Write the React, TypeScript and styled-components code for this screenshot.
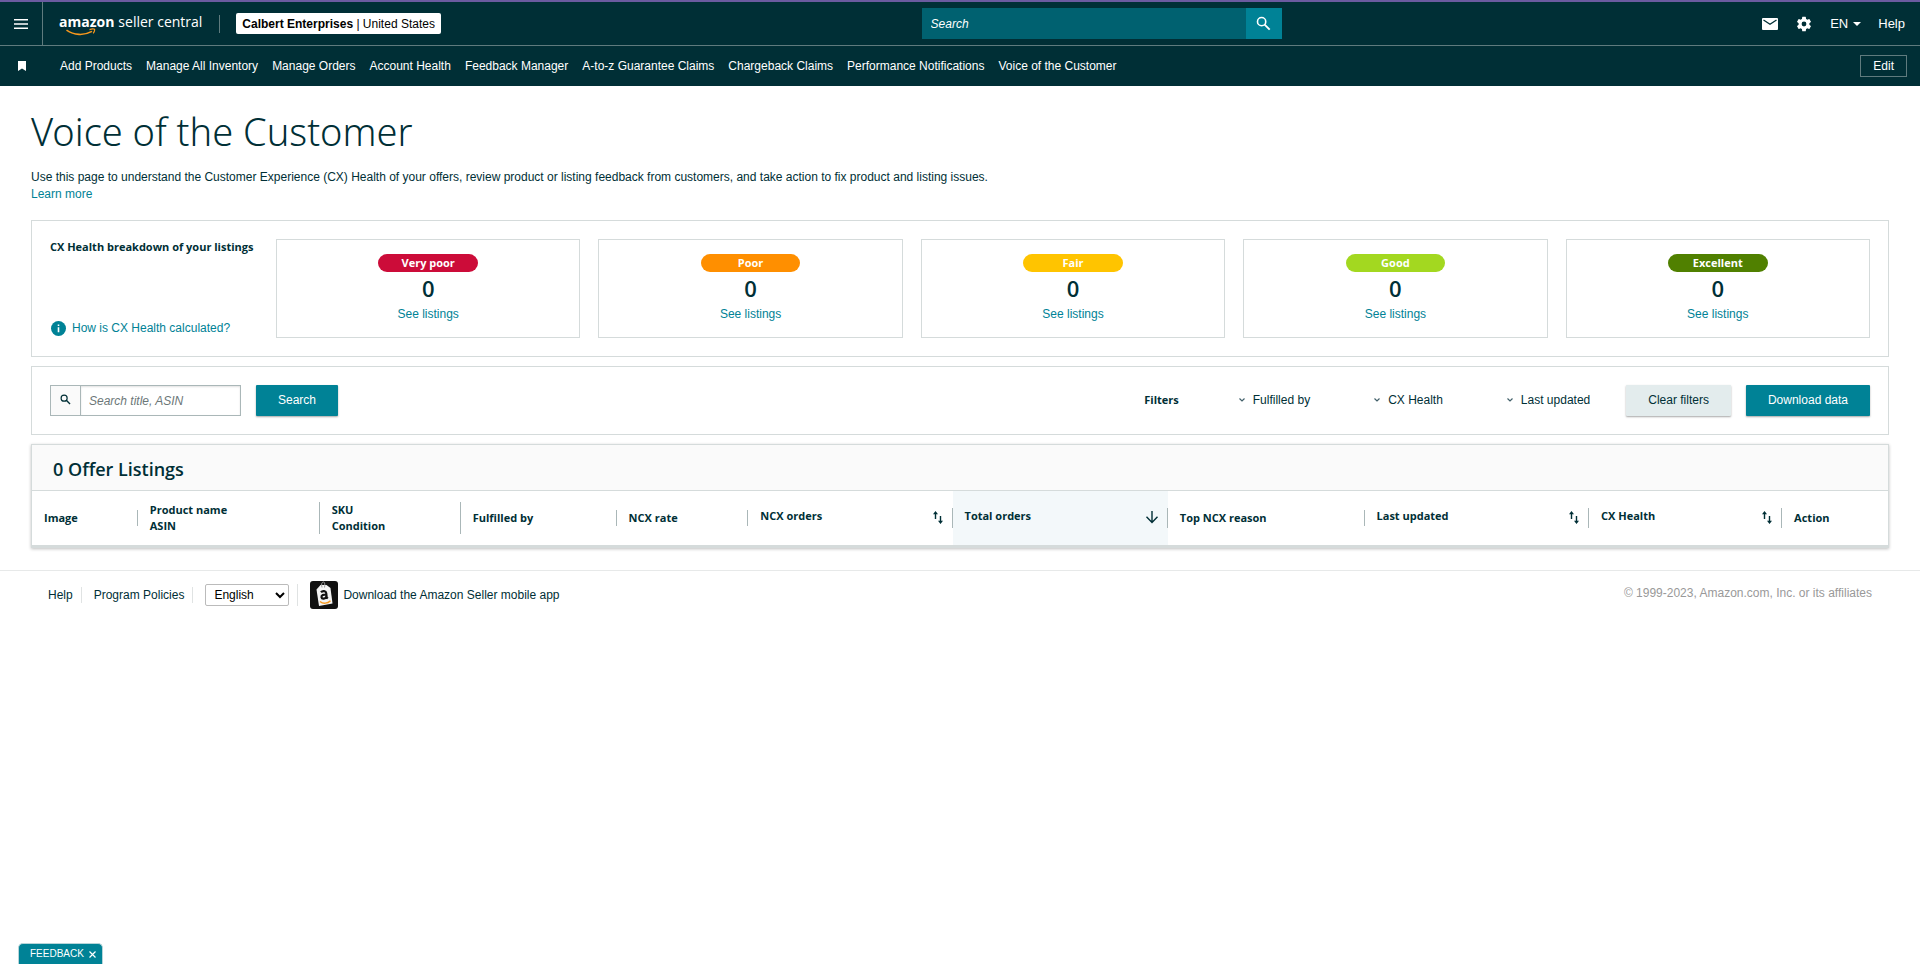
import React from "react";
import styled, { createGlobalStyle } from "styled-components";

const color = {
  ink: "#002f36",
  teal: "#008296",
  tealDark: "#006170",
  border: "#d5dbdb",
  rule: "#aab7b8",
  headRule: "#5f7b7e",
};

const display = `"Open Sans", "Noto Sans", sans-serif`;

const GlobalStyle = createGlobalStyle`
  *, *::before, *::after { box-sizing: border-box; }
  body {
    margin: 0;
    background: #fff;
    color: ${color.ink};
    font-family: "Liberation Sans", Arial, sans-serif;
    font-size: 12px;
    line-height: 16px;
  }
  a { color: inherit; text-decoration: none; }
  button, input, select { font: inherit; color: inherit; margin: 0; }
  button { border: 0; padding: 0; background: none; cursor: pointer; }
  h1, h2, p, ul { margin: 0; padding: 0; }
  ul { list-style: none; }
  svg { display: block; flex: none; }
`;

/* ---------- header ---------- */

const Header = styled.header`
  background: ${color.ink};
  color: #fff;
  border-top: 2px solid #6b5ba0;
`;

const TopBar = styled.div`
  display: grid;
  grid-template-columns: 48% 360px 1fr;
  height: 44px;
  align-items: center;
  border-bottom: 1px solid ${color.headRule};
`;

const TopLeft = styled.div`
  display: flex;
  align-items: center;
  align-self: stretch;
`;

const MenuButton = styled.button`
  align-self: stretch;
  width: 43px;
  display: flex;
  align-items: center;
  justify-content: center;
  border-right: 1px solid ${color.headRule};
`;

const Logo = styled.a`
  position: relative;
  display: flex;
  gap: 4px;
  margin-left: 16px;
  padding-bottom: 3px;
  font-family: ${display};
  font-size: 14px;
  line-height: 20px;
  white-space: nowrap;

  svg {
    position: absolute;
    left: 7px;
    top: 16px;
  }
`;

const HeadDivider = styled.span`
  width: 1px;
  height: 18px;
  margin: 0 16px 0 17px;
  background: ${color.headRule};
`;

const StoreButton = styled.button`
  height: 21px;
  padding: 0 6px;
  border-radius: 2px;
  background: #fff;
  color: #000;
  white-space: nowrap;
`;

const SiteSearch = styled.form`
  display: flex;
  height: 31px;

  input {
    flex: 1;
    min-width: 0;
    padding: 0 9px;
    border: 0;
    border-radius: 0;
    background: ${color.tealDark};
    color: #fff;
  }
  input::placeholder {
    color: #fff;
    font-style: italic;
    opacity: 1;
  }
  button {
    width: 36px;
    display: flex;
    align-items: center;
    justify-content: center;
    background: ${color.teal};
  }
`;

const TopRight = styled.div`
  display: flex;
  align-items: center;
  justify-content: flex-end;
  gap: 17px;
  padding-right: 15px;
`;

const IconButton = styled.button`
  display: flex;
  align-items: center;
`;

const LanguageButton = styled.button`
  display: flex;
  align-items: center;
  gap: 5px;
  font-size: 13px;
`;

const HelpLink = styled.a`
  font-size: 13px;
`;

const FavoritesBar = styled.nav`
  display: flex;
  align-items: center;
  height: 40px;
  padding: 0 13px 0 18px;
`;

const FavoritesList = styled.ul`
  flex: 1;
  display: flex;
  gap: 14px;
  margin-left: 34px;
  white-space: nowrap;
`;

const EditButton = styled.button`
  height: 22px;
  padding: 0 12px;
  border: 1px solid ${color.headRule};
`;

/* ---------- page ---------- */

const Main = styled.main`
  padding: 21px 31px 22px;
`;

const Title = styled.h1`
  font-family: "Noto Sans", sans-serif;
  font-weight: 300;
  font-size: 38px;
  line-height: 48px;
`;

const Intro = styled.p`
  margin: 14px 0 17px;
  line-height: 17px;
`;

const TextLink = styled.a`
  color: ${color.teal};
`;

const Panel = styled.section`
  border: 1px solid ${color.border};
  padding: 18px;
  margin-bottom: 9px;
`;

const HealthPanel = styled(Panel)`
  display: grid;
  grid-template-columns: 208px repeat(5, 1fr);
  gap: 18px;
`;

const HealthIntro = styled.div`
  display: flex;
  flex-direction: column;
  justify-content: space-between;
  height: 99px;
`;

const Label = styled.h2`
  font-family: ${display};
  font-weight: 700;
  font-size: 11px;
  line-height: 16px;
  white-space: nowrap;
`;

const InfoLink = styled.a`
  display: flex;
  align-items: center;
  gap: 6px;
  padding-left: 1px;
  margin-bottom: 2px;
  color: ${color.teal};
`;

const HealthCard = styled.div`
  display: flex;
  flex-direction: column;
  align-items: center;
  height: 99px;
  padding-top: 14px;
  border: 1px solid ${color.border};
`;

const Pill = styled.span<{ $tone: string }>`
  width: 33%;
  height: 18px;
  border-radius: 9px;
  background: ${(p) => p.$tone};
  color: #fff;
  font-family: ${display};
  font-weight: 700;
  font-size: 11px;
  line-height: 18px;
  text-align: center;
`;

const Count = styled.span`
  margin: 3px 0 5px;
  font-family: ${display};
  font-weight: 600;
  font-size: 22px;
  line-height: 26px;
`;

const FilterPanel = styled(Panel)`
  display: flex;
  align-items: flex-start;
  height: 69px;
`;

const ListingSearch = styled.form`
  display: flex;
  gap: 15px;
`;

const SearchField = styled.label`
  display: flex;
  width: 191px;
  height: 31px;
  border: 1px solid ${color.rule};

  span {
    width: 30px;
    display: flex;
    align-items: center;
    justify-content: center;
    padding-bottom: 3px;
    border-right: 1px solid ${color.rule};
    background: #fafafa;
  }
  input {
    flex: 1;
    min-width: 0;
    padding: 0 8px;
    border: 0;
    box-shadow: inset 0 1px 2px rgba(0, 0, 0, 0.12);
  }
  input::placeholder {
    color: #6c7778;
    font-style: italic;
    opacity: 1;
  }
`;

const Button = styled.button<{ $quiet?: boolean }>`
  height: 31px;
  padding: 0 22px 2px;
  border-radius: 1px;
  background: ${(p) => (p.$quiet ? "#e3eced" : color.teal)};
  color: ${(p) => (p.$quiet ? color.ink : "#fff")};
  box-shadow: 0 1px 2px rgba(0, 0, 0, 0.35);
  white-space: nowrap;
`;

const FilterGroup = styled.div`
  flex: 1;
  display: flex;
  align-items: center;
  justify-content: flex-end;
  height: 30px;
`;

const FilterLabel = styled(Label)`
  margin-right: 60px;
`;

const FilterButton = styled.button`
  display: flex;
  align-items: center;
  gap: 8px;
  margin-right: 64px;
  white-space: nowrap;

  &:last-child {
    margin-right: 0;
  }
`;

const FilterActions = styled.div`
  display: flex;
  gap: 15px;
  margin-left: 36px;
`;

const ListingsPanel = styled.section`
  border: 1px solid ${color.border};
  border-bottom-width: 3px;
  box-shadow: 0 1px 3px rgba(0, 0, 0, 0.25);
`;

const ListingsTitle = styled.h2`
  height: 46px;
  padding-left: 21px;
  border-bottom: 1px solid ${color.border};
  background: #fafafa;
  font-family: ${display};
  font-weight: 600;
  font-size: 18px;
  line-height: 48px;
`;

const Table = styled.table`
  width: 100%;
  table-layout: fixed;
  border-collapse: collapse;
`;

const HeadCell = styled.th<{ $share: number; $active?: boolean }>`
  width: ${(p) => p.$share}%;
  height: 54px;
  padding: 0;
  vertical-align: middle;
  background: ${(p) => (p.$active ? "#f3f8fa" : "transparent")};
  font-family: ${display};
  font-weight: 700;
  font-size: 11px;
  line-height: 16px;
  text-align: left;
`;

const HeadText = styled.div<{ $last?: boolean }>`
  padding-left: 12px;
  border-right: 1px solid ${(p) => (p.$last ? "transparent" : color.rule)};
`;

const SortButton = styled.button`
  display: flex;
  align-items: flex-start;
  justify-content: space-between;
  width: 100%;
  height: 20px;
  padding: 0 8px 0 12px;
  border-right: 1px solid ${color.rule};
  font-weight: 700;
`;

/* ---------- footer ---------- */

const Footer = styled.footer`
  display: flex;
  align-items: center;
  height: 48px;
  padding: 0 48px;
  border-top: 1px solid #e7e9e9;
`;

const FooterDivider = styled.span<{ $tall?: boolean }>`
  width: 1px;
  height: ${(p) => (p.$tall ? 22 : 16)}px;
  margin: 0 12px 0 8px;
  background: #e0e3e3;
`;

const LanguageSelect = styled.select`
  width: 84px;
  height: 22px;
  padding: 0 4px;
  border: 1px solid #bbb;
  border-radius: 2px;
  background: #fff;
  color: #000;
`;

const AppLink = styled.a`
  flex: 1;
  display: flex;
  align-items: center;
  gap: 5px;
`;

const Copyright = styled.p`
  padding-bottom: 4px;
  color: #999;
`;

const FeedbackTab = styled.div`
  position: fixed;
  left: 18px;
  bottom: 0;
  display: flex;
  align-items: center;
  gap: 5px;
  height: 21px;
  padding: 0 6px 0 11px;
  border: 1px solid #b7d5d9;
  border-bottom: 0;
  border-radius: 5px 5px 0 0;
  background: ${color.teal};
  color: #fff;
  font-size: 10px;
`;

/* ---------- icons ---------- */

const SearchIcon = ({ size }: { size: number }) => (
  <svg width={size} height={size} viewBox="0 0 16 16" fill="none" stroke="currentColor" aria-hidden="true">
    <circle cx="6" cy="6" r="4.4" strokeWidth="1.7" />
    <path d="M9.2 9.2 14.6 14.6" strokeWidth="2" />
  </svg>
);

const Chevron = () => (
  <svg width="6" height="4" viewBox="0 0 6 4" fill="none" stroke="#42606a" strokeWidth="1.2" aria-hidden="true">
    <path d="M0.5 0.5 3 3 5.5 0.5" />
  </svg>
);

const SortIcon = () => (
  <svg width="12" height="18" viewBox="0 0 12 18" fill="none" stroke={color.ink} strokeWidth="1.4" aria-hidden="true">
    <path d="M3.5 11V5M8.5 8v6" />
    <path d="M3.5 3 6 6.200H1ZM8.500 16 6 12.800h5Z" fill={color.ink} stroke="none" />
  </svg>
);

const ArrowDown = () => (
  <svg width="14" height="16" viewBox="0 0 14 16" fill="none" stroke={color.ink} strokeWidth="1.4" aria-hidden="true">
    <path d="M7 3v11.5M1.5 8.800 7 14.400l5.500-5.600" />
  </svg>
);

/* ---------- data ---------- */

const favorites = [
  "Add Products",
  "Manage All Inventory",
  "Manage Orders",
  "Account Health",
  "Feedback Manager",
  "A-to-z Guarantee Claims",
  "Chargeback Claims",
  "Performance Notifications",
  "Voice of the Customer",
];

const health = [
  { name: "Very poor", tone: "#cc0c39" },
  { name: "Poor", tone: "#ff8f00" },
  { name: "Fair", tone: "#ffc400" },
  { name: "Good", tone: "#a3d820" },
  { name: "Excellent", tone: "#508000" },
];

const filters = ["Fulfilled by", "CX Health", "Last updated"];

type Column = { lines: string[]; share: number; sort?: "both" | "down" };

const columns: Column[] = [
  { lines: ["Image"], share: 5.7 },
  { lines: ["Product name", "ASIN"], share: 9.8 },
  { lines: ["SKU", "Condition"], share: 7.6 },
  { lines: ["Fulfilled by"], share: 8.4 },
  { lines: ["NCX rate"], share: 7.1 },
  { lines: ["NCX orders"], share: 11, sort: "both" },
  { lines: ["Total orders"], share: 11.6, sort: "down" },
  { lines: ["Top NCX reason"], share: 10.6 },
  { lines: ["Last updated"], share: 12.1, sort: "both" },
  { lines: ["CX Health"], share: 10.4, sort: "both" },
  { lines: ["Action"], share: 5.7 },
];

export default function App() {
  return (
    <>
      <GlobalStyle />
      <Header>
        <TopBar>
          <TopLeft>
            <MenuButton aria-label="Menu">
              <svg width="14" height="10" viewBox="0 0 14 10" fill="#fff" aria-hidden="true">
                <path d="M0 0h14v1.6H0zM0 4.2h14v1.6H0zM0 8.4h14V10H0z" />
              </svg>
            </MenuButton>
            <Logo href="#">
              <b>amazon</b>
              <span>seller central</span>
              <svg width="31" height="8" viewBox="0 0 31 8" fill="none" stroke="#f7981d" aria-hidden="true">
                <path d="M0.5 2.2C8 7.4 18 7.800 26 3.400" strokeWidth="1.6" />
                <path d="M23.5 1.600c2-.7 4-.9 5-.4.4 1.200-.2 2.800-1.300 4.200" strokeWidth="1.200" />
              </svg>
            </Logo>
            <HeadDivider />
            <StoreButton>
              <b>Calbert Enterprises</b> | United States
            </StoreButton>
          </TopLeft>
          <SiteSearch role="search">
            <input type="text" placeholder="Search" aria-label="Search" />
            <button type="button" aria-label="Submit search">
              <SearchIcon size={15} />
            </button>
          </SiteSearch>
          <TopRight>
            <IconButton aria-label="Messages">
              <svg width="16" height="12" viewBox="0 0 16 12" aria-hidden="true">
                <rect width="16" height="12" rx="1" fill="#fff" />
                <path d="M1.500 2 8 6.200 14.500 2" fill="none" stroke={color.ink} strokeWidth="1.300" />
              </svg>
            </IconButton>
            <IconButton aria-label="Settings">
              <svg width="18" height="18" viewBox="0 0 24 24" fill="#fff" aria-hidden="true">
                <path d="M19.140 12.940c.040-.300.060-.610.060-.940s-.020-.640-.070-.940l2.030-1.580a.490.490 0 0 0 .120-.610l-1.920-3.320a.488.488 0 0 0-.590-.220l-2.390.960a7.030 7.030 0 0 0-1.620-.940l-.360-2.540a.484.484 0 0 0-.480-.410h-3.840a.480.480 0 0 0-.470.410l-.360 2.540c-.590.240-1.130.570-1.620.940l-2.390-.960a.480.480 0 0 0-.590.220L2.740 8.870a.480.480 0 0 0 .120.610l2.030 1.580c-.050.300-.090.630-.090.940s.020.640.070.940l-2.030 1.580a.490.490 0 0 0-.120.610l1.920 3.320c.120.220.370.290.590.220l2.390-.960c.500.380 1.030.700 1.620.940l.360 2.540c.050.240.240.410.480.410h3.840c.240 0 .440-.170.470-.410l.360-2.540c.590-.240 1.130-.560 1.620-.940l2.390.960c.220.080.470 0 .590-.220l1.920-3.320a.480.480 0 0 0-.120-.610zM12 15.200a3.200 3.200 0 1 1 0-6.400 3.200 3.200 0 0 1 0 6.400z" />
              </svg>
            </IconButton>
            <LanguageButton>
              EN
              <svg width="8" height="4" viewBox="0 0 8 4" fill="#fff" aria-hidden="true">
                <path d="M0 0h8L4 4z" />
              </svg>
            </LanguageButton>
            <HelpLink href="#">Help</HelpLink>
          </TopRight>
        </TopBar>
        <FavoritesBar aria-label="Favorites">
          <svg width="8" height="10" viewBox="0 0 8 10" fill="#fff" aria-hidden="true">
            <path d="M0 0h8v10L4 7.500 0 10z" />
          </svg>
          <FavoritesList>
            {favorites.map((name) => (
              <li key={name}>
                <a href="#">{name}</a>
              </li>
            ))}
          </FavoritesList>
          <EditButton>Edit</EditButton>
        </FavoritesBar>
      </Header>

      <Main>
        <Title>Voice of the Customer</Title>
        <Intro>
          Use this page to understand the Customer Experience (CX) Health of your offers, review product or listing
          feedback from customers, and take action to fix product and listing issues.
          <br />
          <TextLink href="#">Learn more</TextLink>
        </Intro>

        <HealthPanel>
          <HealthIntro>
            <Label>CX Health breakdown of your listings</Label>
            <InfoLink href="#">
              <svg width="15" height="15" viewBox="0 0 15 15" aria-hidden="true">
                <circle cx="7.500" cy="7.500" r="7.500" fill={color.teal} />
                <path d="M6.700 3.500h1.600v1.600H6.700zM6.700 6.300h1.600v5H6.700z" fill="#fff" />
              </svg>
              How is CX Health calculated?
            </InfoLink>
          </HealthIntro>
          {health.map((item) => (
            <HealthCard key={item.name}>
              <Pill $tone={item.tone}>{item.name}</Pill>
              <Count>0</Count>
              <TextLink href="#">See listings</TextLink>
            </HealthCard>
          ))}
        </HealthPanel>

        <FilterPanel>
          <ListingSearch>
            <SearchField>
              <span>
                <SearchIcon size={11} />
              </span>
              <input type="text" placeholder="Search title, ASIN" aria-label="Search title, ASIN" />
            </SearchField>
            <Button type="button">Search</Button>
          </ListingSearch>
          <FilterGroup>
            <FilterLabel>Filters</FilterLabel>
            {filters.map((name) => (
              <FilterButton key={name}>
                <Chevron />
                {name}
              </FilterButton>
            ))}
          </FilterGroup>
          <FilterActions>
            <Button type="button" $quiet>
              Clear filters
            </Button>
            <Button type="button">Download data</Button>
          </FilterActions>
        </FilterPanel>

        <ListingsPanel>
          <ListingsTitle>0 Offer Listings</ListingsTitle>
          <Table>
            <thead>
              <tr>
                {columns.map((col, index) => (
                  <HeadCell key={col.lines[0]} scope="col" $share={col.share} $active={col.sort === "down"}>
                    {col.sort ? (
                      <SortButton>
                        {col.lines[0]}
                        {col.sort === "down" ? <ArrowDown /> : <SortIcon />}
                      </SortButton>
                    ) : (
                      <HeadText $last={index === columns.length - 1}>
                        {col.lines.map((line) => (
                          <div key={line}>{line}</div>
                        ))}
                      </HeadText>
                    )}
                  </HeadCell>
                ))}
              </tr>
            </thead>
          </Table>
        </ListingsPanel>
      </Main>

      <Footer>
        <a href="#">Help</a>
        <FooterDivider />
        <a href="#">Program Policies</a>
        <FooterDivider />
        <LanguageSelect aria-label="Language" defaultValue="English">
          <option>English</option>
        </LanguageSelect>
        <FooterDivider $tall />
        <AppLink href="#">
          <svg width="28" height="28" viewBox="0 0 28 28" aria-hidden="true">
            <rect width="28" height="28" rx="3" fill="#111" />
            <path d="M6.500 8.500 10.500 4h6L20.500 7l2 15.500L9 25z" fill="#f4f4f4" />
            <path d="M12 6.500C11 3 12 1 13.500 1S15 4 14.500 6.500" fill="none" stroke="#999" />
            <path d="M11 11.200c1.500-1.800 5-1.500 5.200.800l.5 4.500 1.100 1M16.500 13.500c-3-.100-5.400.700-5 2.700.400 2.200 4 1.900 4.900-.700" fill="none" stroke="#111" strokeWidth="2.200" />
            <path d="M10 20.500c3 2.500 7.500 2.200 10.500-.800" fill="none" stroke="#f7981d" strokeWidth="1.400" />
          </svg>
          Download the Amazon Seller mobile app
        </AppLink>
        <Copyright>© 1999-2023, Amazon.com, Inc. or its affiliates</Copyright>
      </Footer>

      <FeedbackTab>
        <button>FEEDBACK</button>
        <IconButton aria-label="Close feedback">
          <svg width="7" height="7" viewBox="0 0 7 7" fill="none" stroke="#fff" strokeWidth="1.200" aria-hidden="true">
            <path d="M0.500 0.500l6 6M6.500 0.500l-6 6" />
          </svg>
        </IconButton>
      </FeedbackTab>
    </>
  );
}
